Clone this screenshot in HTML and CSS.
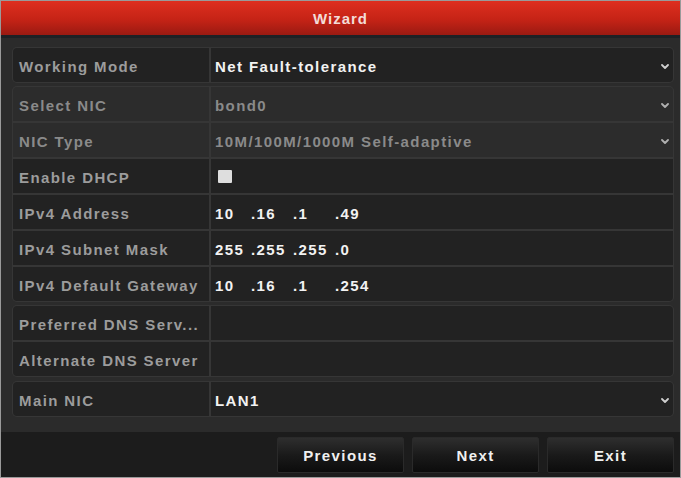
FILE: index.html
```html
<!DOCTYPE html>
<html lang="en">
<head>
    <meta charset="UTF-8">
    <meta name="viewport" content="width=device-width, initial-scale=1.0">
    <title>Wizard</title>
    <link rel="stylesheet" href="styles.css">
</head>
<body>
    <div class="wizard">
        <div class="wizard-title">Wizard</div>

        <div class="wizard-body">
            <!-- Working mode -->
            <div class="group">
                <div class="row">
                    <div class="cell label">Working Mode</div>
                    <div class="cell value select">
                        <span>Net Fault-tolerance</span>
                        <svg class="chevron" width="8" height="5" viewBox="0 0 8 5"><polyline points="1,1 4,4 7,1"/></svg>
                    </div>
                </div>
            </div>

            <!-- NIC / IPv4 -->
            <div class="group">
                <div class="row disabled">
                    <div class="cell label">Select NIC</div>
                    <div class="cell value select">
                        <span>bond0</span>
                        <svg class="chevron" width="8" height="5" viewBox="0 0 8 5"><polyline points="1,1 4,4 7,1"/></svg>
                    </div>
                </div>
                <div class="row disabled">
                    <div class="cell label">NIC Type</div>
                    <div class="cell value select">
                        <span>10M/100M/1000M Self-adaptive</span>
                        <svg class="chevron" width="8" height="5" viewBox="0 0 8 5"><polyline points="1,1 4,4 7,1"/></svg>
                    </div>
                </div>
                <div class="row">
                    <div class="cell label">Enable DHCP</div>
                    <div class="cell value"><span class="checkbox"></span></div>
                </div>
                <div class="row">
                    <div class="cell label">IPv4 Address</div>
                    <div class="cell value ip">
                        <span class="octet">10</span><span class="octet">.16</span><span class="octet">.1</span><span class="octet">.49</span>
                    </div>
                </div>
                <div class="row">
                    <div class="cell label">IPv4 Subnet Mask</div>
                    <div class="cell value ip">
                        <span class="octet">255</span><span class="octet">.255</span><span class="octet">.255</span><span class="octet">.0</span>
                    </div>
                </div>
                <div class="row">
                    <div class="cell label">IPv4 Default Gateway</div>
                    <div class="cell value ip">
                        <span class="octet">10</span><span class="octet">.16</span><span class="octet">.1</span><span class="octet">.254</span>
                    </div>
                </div>
            </div>

            <!-- DNS -->
            <div class="group">
                <div class="row">
                    <div class="cell label">Preferred DNS Serv...</div>
                    <div class="cell value"></div>
                </div>
                <div class="row">
                    <div class="cell label">Alternate DNS Server</div>
                    <div class="cell value"></div>
                </div>
            </div>

            <!-- Main NIC -->
            <div class="group">
                <div class="row">
                    <div class="cell label">Main NIC</div>
                    <div class="cell value select">
                        <span>LAN1</span>
                        <svg class="chevron" width="8" height="5" viewBox="0 0 8 5"><polyline points="1,1 4,4 7,1"/></svg>
                    </div>
                </div>
            </div>
        </div>

        <div class="wizard-footer">
            <button type="button">Previous</button>
            <button type="button">Next</button>
            <button type="button">Exit</button>
        </div>
    </div>
</body>
</html>
```

FILE: styles.css
```css
* {
    box-sizing: border-box;
}

body {
    margin: 0;
    background-color: #2b2b2b;
    font-family: "Liberation Sans", Arial, sans-serif;
    font-size: 15px;
    font-weight: bold;
    letter-spacing: 1.4px;
}

.wizard {
    width: 681px;
    height: 478px;
    display: flex;
    flex-direction: column;
    border: 1px solid #9a9a9a;
    background-color: #2b2b2b;
}

.wizard-title {
    height: 37px;
    display: flex;
    align-items: center;
    justify-content: center;
    color: #f3dcd8;
    letter-spacing: 1px;
    background: linear-gradient(#de2f1f, #c52316 55%, #9a1a12);
    border-bottom: 3px solid #1d2125;
    flex-shrink: 0;
}

.wizard-body {
    flex: 1;
    padding: 9px 6px 0 11px;
    display: flex;
    flex-direction: column;
    gap: 3px;
}

.group {
    display: flex;
    flex-direction: column;
    gap: 2px;
    padding: 1px;
    background-color: #363636;
    border-radius: 5px;
}

.group:nth-child(4) {
    margin-top: 1px;
}

.row {
    height: 34px;
    display: grid;
    grid-template-columns: 196px 1fr;
    gap: 2px;
}

.cell {
    display: flex;
    align-items: center;
    padding-top: 2px;
    background-color: #222222;
    white-space: nowrap;
}

.row:first-child .label {
    border-top-left-radius: 4px;
}

.row:last-child .label {
    border-bottom-left-radius: 4px;
}

.row:first-child .value {
    border-top-right-radius: 4px;
}

.row:last-child .value {
    border-bottom-right-radius: 4px;
}

.label {
    padding-left: 6px;
    color: #9c9c9c;
}

.value {
    padding-left: 4px;
    color: #f2f2f2;
}

.select {
    justify-content: space-between;
    padding-right: 4px;
}

.chevron {
    fill: none;
    stroke: #cfcfcf;
    stroke-width: 1.8;
    stroke-linecap: round;
    stroke-linejoin: round;
}

/* greyed out rows */
.disabled .cell {
    background-color: #2c2c2c;
    color: #8a8a8a;
}

.disabled .chevron {
    stroke: #b0b0b0;
}

.checkbox {
    width: 14px;
    height: 13px;
    margin-left: 3px;
    margin-bottom: 2px;
    background-color: #dedede;
    border-radius: 1px;
}

.octet {
    display: inline-block;
    width: 42px;
}

.octet:first-child {
    width: 36px;
}

.wizard-footer {
    height: 45px;
    margin-top: 11px;
    padding: 5px 6px 0 0;
    display: flex;
    justify-content: flex-end;
    gap: 8px;
    background-color: #1c1c1c;
}

button {
    width: 127px;
    height: 36px;
    border: 1px solid #2a2a2a;
    border-radius: 2px;
    background: linear-gradient(#2e2e2e, #1a1a1a 50%, #0c0c0c);
    color: #f0f0f0;
    font-family: inherit;
    font-size: 15px;
    font-weight: bold;
    letter-spacing: 1.4px;
    cursor: pointer;
}
```
